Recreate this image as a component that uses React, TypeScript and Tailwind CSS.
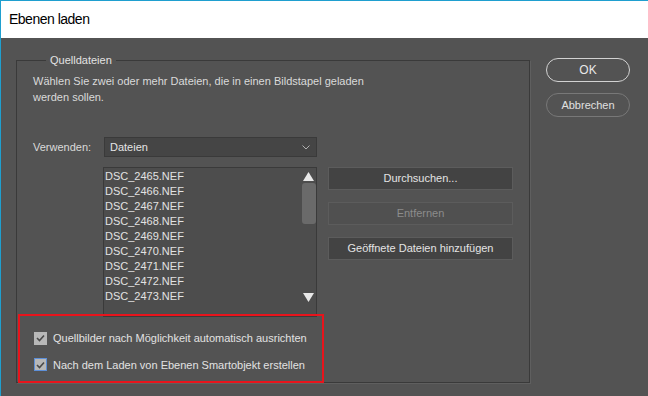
const files = [
  'DSC_2465.NEF',
  'DSC_2466.NEF',
  'DSC_2467.NEF',
  'DSC_2468.NEF',
  'DSC_2469.NEF',
  'DSC_2470.NEF',
  'DSC_2471.NEF',
  'DSC_2472.NEF',
  'DSC_2473.NEF',
];

function Check({ focused }: { focused?: boolean }) {
  return (
    <span
      className={`flex items-center justify-center w-[13px] h-[13px] bg-[#b8b8b8] border ${
        focused ? 'border-[#5d8fd8]' : 'border-[#b8b8b8]'
      }`}
    >
      <svg width="9" height="8" viewBox="0 0 9 8" fill="none">
        <path d="M1 4l2.5 2.5L8 1.5" stroke="#4a4a4a" strokeWidth="1.6" />
      </svg>
    </span>
  );
}

export default function App() {
  return (
    <div
      className="w-[648px] h-[396px] flex flex-col border-l border-t border-[#1f9fcf] overflow-hidden"
      style={{ fontFamily: '"Liberation Sans", Arial, sans-serif' }}
    >
      {/* Title bar */}
      <div className="h-[37px] bg-white flex items-center pl-2 text-[14px] text-black tracking-[-0.5px]">
        Ebenen laden
      </div>

      {/* Body */}
      <div className="flex-1 bg-[#535353] flex pt-[15px] text-[11px] text-[#dadada]">
        <fieldset className="ml-[15px] w-[514px] h-[330px] border border-[#3a3a3a] shadow-[1px_1px_0_#5f5f5f] px-4">
          <legend className="ml-[13px] px-[4px] leading-[14px] text-[#e2e2e2]">Quelldateien</legend>

          <p className="leading-[16px] mt-[6px] w-[345px]">
            Wählen Sie zwei oder mehr Dateien, die in einen Bildstapel geladen werden sollen.
          </p>

          <div className="flex items-center mt-[32px]">
            <span className="w-[71px]">Verwenden:</span>
            <div className="w-[213px] h-[20px] bg-[#454545] border border-[#3a3a3a] flex items-center justify-between pl-[5px] pr-[6px] text-[#e4e4e4]">
              <span>Dateien</span>
              <svg width="8" height="5" viewBox="0 0 8 5" fill="none">
                <path d="M0.5 0.5L4 4l3.5-3.5" stroke="#b0b0b0" />
              </svg>
            </div>
          </div>

          <div className="flex mt-[10px]">
            <div className="w-[70px]" />
            <div className="w-[214px] h-[150px] bg-[#4d4d4d] border border-[#3a3a3a] flex">
              <ul className="flex-1 pl-[1px] pt-[1px] text-[#e2e2e2]">
                {files.map((f) => (
                  <li key={f} className="leading-[15px]">
                    {f}
                  </li>
                ))}
              </ul>
              <div className="w-[15px] flex flex-col items-center pt-[4px] pb-[14px]">
                <svg width="11" height="9" viewBox="0 0 11 9">
                  <path d="M5.5 0L11 9H0z" fill="#e8e8e8" />
                </svg>
                <div className="w-[14px] h-[41px] rounded-[3px] bg-[#6a6a6a] mt-[2px]" />
                <div className="flex-1" />
                <svg width="11" height="9" viewBox="0 0 11 9">
                  <path d="M0 0h11L5.5 9z" fill="#e8e8e8" />
                </svg>
              </div>
            </div>
            <div className="ml-[11px] w-[185px] flex flex-col gap-[12px]">
              <button className="h-[23px] bg-[#434343] border border-[#5c5c5c] text-[#e4e4e4]">
                Durchsuchen...
              </button>
              <button className="h-[23px] bg-[#505050] border border-[#5c5c5c] text-[#8c8c8c]">
                Entfernen
              </button>
              <button className="h-[23px] bg-[#434343] border border-[#5c5c5c] text-[#e4e4e4]">
                Geöffnete Dateien hinzufügen
              </button>
            </div>
          </div>

          <div className="relative -ml-[15px] mt-[-3px] w-[306px] h-[69px] border-2 border-[#e8141c] flex flex-col pl-[14px] pt-[14px] gap-[10px] text-[#e2e2e2]">
            <label className="flex items-center gap-[6px]">
              <Check />
              <span>Quellbilder nach Möglichkeit automatisch ausrichten</span>
            </label>
            <label className="flex items-center gap-[6px]">
              <Check focused />
              <span>Nach dem Laden von Ebenen Smartobjekt erstellen</span>
            </label>
          </div>
        </fieldset>

        <div className="ml-4 mt-[5px] flex flex-col gap-[11px]">
          <button className="w-[84px] h-[24px] rounded-full border border-[#d2d2d2] text-[#e8e8e8] text-[12px]">
            OK
          </button>
          <button className="w-[84px] h-[24px] rounded-full border border-[#787878] text-[#e0e0e0] text-[11px]">
            Abbrechen
          </button>
        </div>
      </div>
    </div>
  );
}
